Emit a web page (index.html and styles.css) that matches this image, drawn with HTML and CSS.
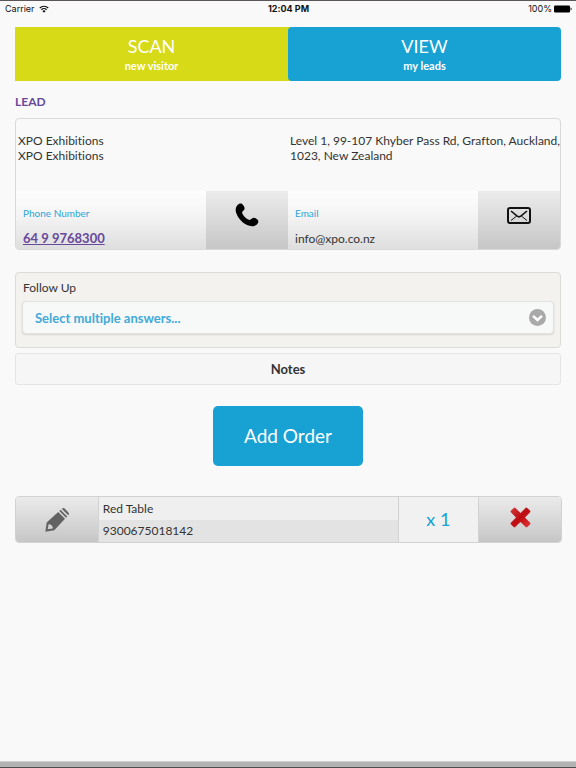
FILE: index.html
```html
<!DOCTYPE html>
<html lang="en">
<head>
    <meta charset="UTF-8">
    <meta name="viewport" content="width=device-width, initial-scale=1.0">
    <title>Lead</title>
    <link rel="stylesheet" href="styles.css">
</head>
<body>

    <header class="status-bar">
        <div class="carrier">
            <span>Carrier</span>
            <svg class="wifi" viewBox="0 0 20 16" fill="none" stroke="#111" stroke-width="2.4">
                <path d="M1.5 6a12 12 0 0 1 17 0M4.8 9.4a7.4 7.4 0 0 1 10.4 0"/>
                <path d="M10 15.5 6.8 12a4.5 4.5 0 0 1 6.4 0z" fill="#111" stroke="none"/>
            </svg>
        </div>
        <div class="clock">12:04 PM</div>
        <div class="power">
            <span>100%</span>
            <svg class="battery" viewBox="0 0 18 8">
                <rect width="16" height="7" y=".5" rx="1.2"/>
                <path d="M16.6 2.6c1.4.3 1.4 2.5 0 2.8z"/>
            </svg>
        </div>
    </header>

    <main class="page">
        <nav class="tabs">
            <a class="tab tab-scan" href="#scan">
                <span class="tab-title">SCAN</span>
                <span class="tab-sub">new visitor</span>
            </a>
            <a class="tab tab-view" href="#leads">
                <span class="tab-title">VIEW</span>
                <span class="tab-sub">my leads</span>
            </a>
        </nav>

        <h1 class="heading">LEAD</h1>

        <section class="card">
            <div class="details">
                <p>XPO Exhibitions<br>XPO Exhibitions</p>
                <p>Level 1, 99-107 Khyber Pass Rd, Grafton, Auckland, 1023, New Zealand</p>
            </div>
            <div class="contacts">
                <div class="contact">
                    <span class="contact-label">Phone Number</span>
                    <a class="phone" href="tel:6499768300">64 9 9768300</a>
                </div>
                <button class="contact-btn" aria-label="Call">
                    <svg class="icon-phone" viewBox="0 0 24 24">
                        <path d="M2.400 2.200C3.600.9 5.800.1 7.100 1c1.300.9 2.600 3.300 2.500 4.700-.1 1.500-2.500 2.500-2.500 3.800 0 2.300 4.700 7.200 7.400 7.400 1.400.1 2.300-2.100 3.900-2.200 1.500-.1 4 1.400 4.700 2.700.8 1.500-.6 3.700-2 4.700-1.700 1.200-4.600 1.300-6.700.7C8 21.200 2.100 14.800.8 8.600.4 6.500.9 3.800 2.400 2.200z"/>
                    </svg>
                </button>
                <div class="contact">
                    <span class="contact-label">Email</span>
                    <span class="email">info@xpo.co.nz</span>
                </div>
                <button class="contact-btn" aria-label="Send email">
                    <svg class="icon-mail" viewBox="0 0 24 17" fill="none" stroke="#111">
                        <rect x="1" y="1" width="22" height="15" rx="2" stroke-width="2"/>
                        <path d="m4 4 6.200 5.200q1.800 1.300 3.600 0L20 4" stroke-width="1.600"/>
                        <path d="m4 13.500 5.500-4.300M20 13.500l-5.500-4.300" stroke-width="1"/>
                    </svg>
                </button>
            </div>
        </section>

        <section class="follow-up">
            <label for="follow">Follow Up</label>
            <div class="select-wrap">
                <select id="follow">
                    <option>Select multiple answers...</option>
                </select>
                <svg class="icon-arrow" viewBox="0 0 17 17">
                    <circle cx="8.500" cy="8.500" r="8.500" fill="#a9a9a9"/>
                    <path d="m4 6.800 4.500 4.200L13 6.800" fill="none" stroke="#fff" stroke-width="2.400"/>
                </svg>
            </div>
        </section>

        <button class="notes-btn">Notes</button>

        <button class="order-btn">Add Order</button>

        <section class="order">
            <button class="order-action" aria-label="Edit">
                <svg class="icon-pencil" viewBox="0 0 24 24" fill="#626262">
                    <path fill-rule="evenodd" d="M.3 23.700 1.700 14.600 13.200 4l6.800 6.800L9.300 22.300zM3.600 16.200l-.9 5.100 5.100-.9c.1-1.200-.3-2.100-1.100-2.900s-1.800-1.300-3.100-1.300z"/>
                    <path d="m14.300 3 1.300-1.200 6.600 6.600L21 9.700zM16.700.8l.5-.4q1.200-.8 2.400.2l3.800 3.800q1 1.200.2 2.400l-.4.5z"/>
                </svg>
            </button>
            <div class="product">
                <span class="product-name">Red Table</span>
                <span class="product-code">9300675018142</span>
            </div>
            <div class="quantity">x 1</div>
            <button class="order-action" aria-label="Remove">
                <svg class="icon-remove" viewBox="0 0 22 22">
                    <defs>
                        <linearGradient id="red" x1="0" y1="0" x2="1" y2="1">
                            <stop offset="0" stop-color="#d33a3a"/>
                            <stop offset=".5" stop-color="#bd0c12"/>
                            <stop offset="1" stop-color="#e5383a"/>
                        </linearGradient>
                    </defs>
                    <path fill="url(#red)" d="M5.500.9 11 6.400 16.500.9q.8-.6 1.600.1l3 3q.7.800 0 1.600L15.700 11l5.400 5.400q.7.800 0 1.600l-3 3q-.8.700-1.600 0L11 15.600 5.500 21q-.8.700-1.600 0l-3-3q-.7-.8 0-1.600L6.300 11 .9 5.600Q.2 4.800.9 4l3-3q.8-.7 1.600-.1z"/>
                </svg>
            </button>
        </section>
    </main>

    <footer class="bottom-bar"></footer>

</body>
</html>
```
FILE: styles.css
```css
* {
    box-sizing: border-box;
}

body {
    font-family: Lato, "Open Sans", sans-serif;
    font-size: 12px;
    font-variant-ligatures: none;
    line-height: 15px;
    color: #333;
    background: #f9f9f9;
    margin: 0;
    min-height: 100vh;
    display: flex;
    flex-direction: column;
}

button,
select {
    font-family: inherit;
    font-variant-ligatures: none;
    color: inherit;
    margin: 0;
    padding: 0;
    cursor: pointer;
}

svg {
    display: block;
}

.status-bar {
    display: grid;
    grid-template-columns: 1fr auto 1fr;
    height: 27px;
    padding: 0 4px 0 5px;
    border-top: 1px solid #5d5659;
    font-family: Inter, "Liberation Sans", sans-serif;
    font-size: 9px;
    color: #111;
}

.carrier,
.power {
    display: flex;
    align-items: center;
    height: 15px;
    gap: 4px;
}

.power {
    justify-content: flex-end;
    gap: 2px;
}

.clock {
    font-weight: bold;
}

.wifi {
    width: 10px;
    height: 8px;
}

.battery {
    width: 18px;
    height: 8px;
}

.page {
    flex: 1;
    display: flex;
    flex-direction: column;
    padding: 0 15px;
}

.tabs {
    display: grid;
    grid-template-columns: 1fr 1fr;
    background: linear-gradient(to right, #d7da16 51%, transparent 51%);
}

.tab {
    display: flex;
    flex-direction: column;
    align-items: center;
    padding: 8px 0;
    color: #fff;
    text-decoration: none;
}

.tab-scan {
    background: #d7da16;
}

.tab-view {
    background: #18a1d3;
    border-radius: 4px;
}

.tab-title {
    font-size: 18px;
    line-height: 23px;
}

.tab-sub {
    font-size: 11px;
    font-weight: bold;
}

.heading {
    margin: 13px 0 9px;
    font-size: 12px;
    font-weight: bold;
    color: #68489b;
}

.card {
    border: 1px solid #d9d9d9;
    border-radius: 4px;
    overflow: hidden;
}

.details {
    display: grid;
    grid-template-columns: 1fr 1fr;
    min-height: 72px;
    padding-top: 14px;
}

.details p {
    margin: 0;
    padding-left: 2px;
}

.contacts {
    display: grid;
    grid-template-columns: 7fr 3fr 7fr 3fr;
}

.contact {
    display: flex;
    flex-direction: column;
    gap: 10px;
    padding: 15px 7px 3px;
    background: linear-gradient(#fdfdfd, #f5f5f5 40%, #dedede);
}

.contact-label {
    font-size: 10px;
    color: #2fa4d6;
}

.phone {
    font-size: 13px;
    font-weight: bold;
    color: #68489b;
}

.contact-btn {
    display: flex;
    align-items: center;
    justify-content: center;
    padding-bottom: 10px;
    border: 0;
    background: linear-gradient(#ececec, #c6c6c6);
}

.icon-phone {
    width: 24px;
    height: 24px;
}

.icon-mail {
    width: 24px;
    height: 17px;
}

.follow-up {
    margin-top: 22px;
    padding: 7px 6px 13px;
    background: #f3f2ee;
    border: 1px solid #dcdbd8;
    border-radius: 4px;
}

.follow-up label {
    display: block;
    margin-bottom: 6px;
    padding-left: 1px;
}

.select-wrap {
    position: relative;
}

.select-wrap select {
    display: block;
    appearance: none;
    width: 100%;
    height: 33px;
    padding: 0 32px 0 12px;
    font-size: 13px;
    font-weight: bold;
    color: #42aad9;
    background: #f7f8f8;
    border: 1px solid #e2e2e0;
    border-radius: 4px;
    box-shadow: 0 1px 2px rgba(0, 0, 0, 0.12);
}

.icon-arrow {
    position: absolute;
    top: 8px;
    right: 8px;
    width: 17px;
    height: 17px;
    pointer-events: none;
}

.notes-btn {
    margin-top: 5px;
    height: 32px;
    font-size: 13px;
    font-weight: bold;
    background: #f6f6f6;
    border: 1px solid #e5e5e5;
    border-radius: 3px;
}

.order-btn {
    align-self: center;
    margin: 21px 0 30px;
    padding: 18px 29px;
    min-width: 150px;
    font-size: 19px;
    line-height: 24px;
    color: #fff;
    background: #18a1d3;
    border: 0;
    border-radius: 5px;
}

.order {
    display: grid;
    grid-template-columns: 3fr 11fr 3fr 3fr;
    min-height: 47px;
    margin-right: -1px;
    border: 1px solid #d2d2d2;
    border-radius: 4px;
    overflow: hidden;
}

.order-action {
    display: flex;
    align-items: center;
    justify-content: center;
    border: 0;
    background: linear-gradient(#ebebeb, #c6c6c6);
}

.product {
    display: grid;
    grid-template-rows: 1fr 1fr;
    border-left: 1px solid #d2d2d2;
    background: #efefef;
}

.product-name,
.product-code {
    display: flex;
    align-items: center;
    padding-left: 4px;
}

.product-code {
    background: #e3e3e3;
}

.quantity {
    display: flex;
    align-items: center;
    justify-content: center;
    font-size: 18px;
    color: #18a1d3;
    background: #f1f1f1;
    border: solid #d2d2d2;
    border-width: 0 1px;
}

.icon-pencil {
    width: 24px;
    height: 24px;
}

.icon-remove {
    width: 21px;
    height: 21px;
    margin-bottom: 4px;
}

.bottom-bar {
    height: 7px;
    background: #b3b3b3;
    border-top: 1px solid #d0d0d0;
    border-bottom: 1px solid #4d4d4d;
}
```
